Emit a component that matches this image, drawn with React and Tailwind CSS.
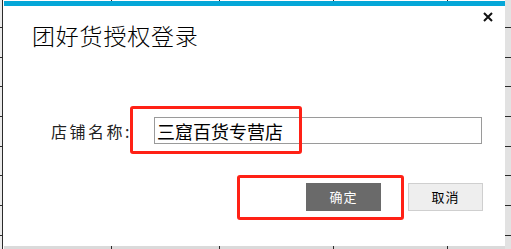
import React from "react";

const ticksV =
  "bg-[image:repeating-linear-gradient(to_bottom,transparent_0px,transparent_27px,#2b2b2b_27px,#2b2b2b_28px,transparent_28px,transparent_29.7px)]";

function TickRow({ className }) {
  return (
    <div className={`flex shrink-0 ${className}`}>
      <div className="w-[107px]" />
      <div className="w-px bg-[#2b2b2b]" />
      <div className="w-[107px]" />
      <div className="w-px bg-[#2b2b2b]" />
      <div className="w-[113px]" />
      <div className="w-px bg-[#2b2b2b]" />
      <div className="w-[113px]" />
      <div className="w-px bg-[#2b2b2b]" />
    </div>
  );
}

function CloseIcon() {
  return (
    <svg width="10" height="10" viewBox="0 0 10 10">
      <path d="M1 1 L9 9 M9 1 L1 9" stroke="#111" strokeWidth="2" />
    </svg>
  );
}

export default function App() {
  return (
    <div className="w-[511px] h-[249px] flex relative overflow-hidden bg-white font-['Noto_Sans_CJK_SC','Noto_Sans',sans-serif] text-black">
      {/* sheet edge left */}
      <div className={`w-[2px] h-full bg-[#ececec] ${ticksV}`} />
      <div className="w-px h-full bg-[#2b2b2b]" />
      <div className="w-px h-full bg-white" />

      {/* dialog column */}
      <div className="w-[501px] h-full flex flex-col">
        <TickRow className="h-px bg-white" />
        <div className="h-[5px] bg-[#05a7d8]" />
        <div className="h-[240px] bg-white flex flex-col">
          <div className="flex justify-between items-start">
            <div className="ml-[28px] mt-[18px] text-[23px] leading-[23px] tracking-[0.8px] font-light">
              团好货授权登录
            </div>
            <div className="mt-[6px] mr-[12px]">
              <CloseIcon />
            </div>
          </div>

          <div className="mt-[70px] flex items-center">
            <div className="ml-[46px] w-[82px] text-right text-[16px] tracking-[2.5px] text-[#222]">
              店铺名称:
            </div>
            <div className="ml-[22px] w-[328px] h-[27px] border border-[#9a9a9a] px-[2px] flex items-center text-[18px] leading-[18px]">
              三窟百货专营店
            </div>
          </div>

          <div className="mt-[39px] flex justify-end gap-[27px] pr-[22px]">
            <button className="w-[75px] h-[28px] bg-[#6a6a6a] text-white text-[13px] tracking-[1px]">
              确定
            </button>
            <button className="w-[75px] h-[28px] bg-[#eeeeee] border border-[#cfcfcf] text-black text-[13px] tracking-[1px]">
              取消
            </button>
          </div>
        </div>
        <TickRow className="h-[3px] bg-[#dadada]" />
      </div>

      {/* sheet edge right */}
      <div className={`w-[6px] h-full bg-[#e2e2e2] ${ticksV}`} />

      {/* red annotation boxes */}
      <div className="absolute left-[130px] top-[106px] w-[172px] h-[48px] border-[3px] border-[#ff2116] rounded-[3px]" />
      <div className="absolute left-[237px] top-[175px] w-[167px] h-[45px] border-[3px] border-[#ff2116] rounded-[3px]" />
    </div>
  );
}
